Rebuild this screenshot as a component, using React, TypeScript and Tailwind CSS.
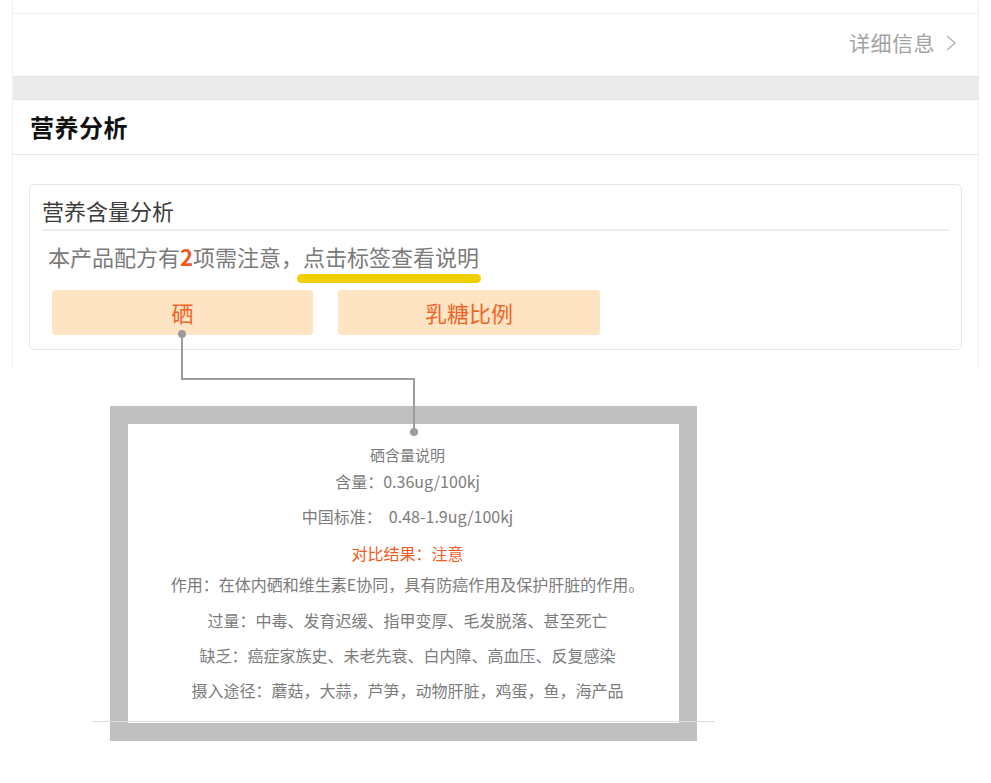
import React from "react";

const font = { fontFamily: '"Microsoft YaHei", "Noto Sans CJK SC", "Noto Sans", sans-serif' };

export default function App() {
  return (
    <div className="relative w-[991px] h-[783px] bg-white overflow-hidden" style={font}>
      {/* page container */}
      <div className="ml-[12px] w-[967px] border-x border-[#f0f0f0] bg-white pb-[17px]">
        <div className="h-[14px] border-b border-[#efefef]" />
        <div className="h-[62px] flex items-center justify-end pr-[20px] pb-[4px]">
          <span className="text-[21px] text-[#a3a3a3] tracking-[0.5px]">详细信息</span>
          <svg width="14" height="20" viewBox="0 0 14 20" className="ml-[9px]">
            <polyline points="3,3 11,10 3,17" fill="none" stroke="#b5b5b5" strokeWidth="1.4" />
          </svg>
        </div>
        <div className="h-[24px] bg-[#ebebeb] border-y border-[#e2e2e2]" />
        <div className="h-[55px] flex items-center pl-[17px] border-b border-[#e6e6e6]">
          <span className="text-[24px] font-bold text-[#111] tracking-[0.5px]">营养分析</span>
        </div>
        <div className="pt-[29px] px-[16px]">
          <div className="h-[166px] border border-[#e6e6e6] rounded-[5px] px-[12px] flex flex-col">
            <div className="h-[46px] flex items-end pb-[6px] border-b-2 border-[#eeeeee]">
              <span className="text-[22px] text-[#3c3c3c] leading-[26px]">营养含量分析</span>
            </div>
            <div className="h-[59px] pl-[6px] pt-[10px]">
              <span className="text-[22px] text-[#7a7a7a] leading-[30px]">
                本产品配方有<span className="text-[#f05a1e] font-bold">2</span>项需注意，
                <span className="relative">
                  点击标签查看说明
                  <span className="absolute left-[-6px] right-[-2px] top-[34px] h-[9px] rounded-full bg-[#f0d000]" />
                </span>
              </span>
            </div>
            <div className="flex gap-[25px] pl-[10px]">
              <div className="w-[261px] h-[45px] bg-[#fee4c3] rounded-[3px] flex items-center justify-center text-[22px] text-[#f0642a]">
                硒
              </div>
              <div className="w-[262px] h-[45px] bg-[#fee4c3] rounded-[3px] flex items-center justify-center text-[22px] text-[#f0642a]">
                乳糖比例
              </div>
            </div>
          </div>
        </div>
      </div>

      {/* popup explanation frame */}
      <div className="mt-[39px] ml-[110px] w-[587px] h-[335px] bg-[#c1c0c1] p-[18px]">
        <div className="w-full h-full bg-white flex flex-col items-center text-[16px] text-[#7c7c7c] leading-[22px] pt-[20px] pl-[8px]">
          <div className="text-[15px]">硒含量说明</div>
          <div className="mt-[4px]">含量：0.36ug/100kj</div>
          <div className="mt-[13px]">中国标准：&nbsp;&nbsp;0.48-1.9ug/100kj</div>
          <div className="mt-[15px] text-[#f05a1e]">对比结果：注意</div>
          <div className="mt-[9px]">作用：在体内硒和维生素E协同，具有防癌作用及保护肝脏的作用。</div>
          <div className="mt-[14px]">过量：中毒、发育迟缓、指甲变厚、毛发脱落、甚至死亡</div>
          <div className="mt-[13px]">缺乏：癌症家族史、未老先衰、白内障、高血压、反复感染</div>
          <div className="mt-[13px]">摄入途径：蘑菇，大蒜，芦笋，动物肝脏，鸡蛋，鱼，海产品</div>
        </div>
      </div>

      {/* annotation overlays */}
      <div className="absolute left-[92px] top-[721px] w-[623px] h-[1px] bg-[#dcdcdc]" />
      <svg className="absolute left-0 top-0 pointer-events-none" width="991" height="783">
        <polyline points="182,334 182,379 414,379 414,432" fill="none" stroke="#9c9c9c" strokeWidth="2" />
        <circle cx="182" cy="334" r="4" fill="#9c9c9c" />
        <circle cx="414" cy="432" r="4" fill="#9c9c9c" />
      </svg>
    </div>
  );
}
